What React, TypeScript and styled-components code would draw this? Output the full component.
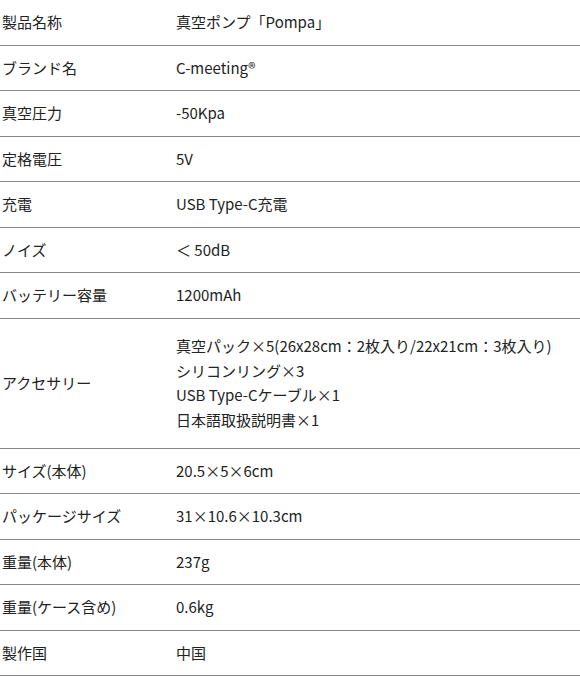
import React from "react";
import styled, { createGlobalStyle } from "styled-components";

const Global = createGlobalStyle`
  html, body { margin: 0; padding: 0; background: #fff; }
  body {
    font-family: "Noto Sans CJK JP", "Noto Sans", sans-serif;
    color: #222;
  }
`;

const Table = styled.div`
  width: 580px;
  display: flex;
  flex-direction: column;
`;

const Row = styled.div<{ $multi?: boolean }>`
  display: grid;
  grid-template-columns: 175px 1fr;
  align-items: center;
  padding: ${(p) => (p.$multi ? "15.5px 0" : "10px 0")};
  border-bottom: 1px solid #8a8a8a;
  font-size: 15px;
  line-height: 24.5px;
`;

const Label = styled.div`
  padding-left: 2px;
`;

const Value = styled.div`
  padding-left: 1px;
  display: flex;
  flex-direction: column;
`;

type Item = { label: string; value: React.ReactNode[] };

const items: Item[] = [
  { label: "製品名称", value: ["真空ポンプ「Pompa」"] },
  { label: "ブランド名", value: ["C-meeting®"] },
  { label: "真空圧力", value: ["-50Kpa"] },
  { label: "定格電圧", value: ["5V"] },
  { label: "充電", value: ["USB Type-C充電"] },
  { label: "ノイズ", value: ["＜ 50dB"] },
  { label: "バッテリー容量", value: ["1200mAh"] },
  {
    label: "アクセサリー",
    value: [
      "真空パック×5(26x28cm：2枚入り/22x21cm：3枚入り)",
      "シリコンリング×3",
      "USB Type-Cケーブル×1",
      "日本語取扱説明書×1",
    ],
  },
  { label: "サイズ(本体)", value: ["20.5×5×6cm"] },
  { label: "パッケージサイズ", value: ["31×10.6×10.3cm"] },
  { label: "重量(本体)", value: ["237g"] },
  { label: "重量(ケース含め)", value: ["0.6kg"] },
  { label: "製作国", value: ["中国"] },
];

export default function App() {
  return (
    <>
      <Global />
      <Table>
        {items.map((it, i) => (
          <Row key={i} $multi={it.value.length > 1}>
            <Label>{it.label}</Label>
            <Value>
              {it.value.map((v, j) => (
                <span key={j}>{v}</span>
              ))}
            </Value>
          </Row>
        ))}
      </Table>
    </>
  );
}
